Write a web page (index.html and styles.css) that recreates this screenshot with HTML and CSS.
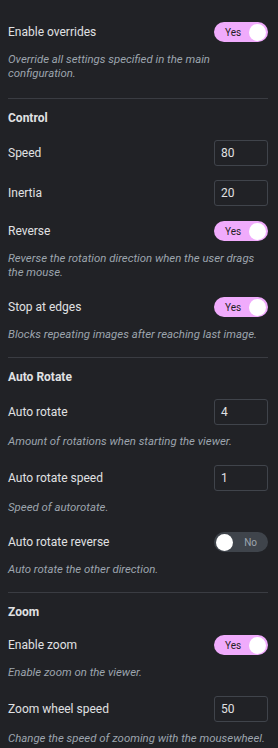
FILE: index.html
```html
<!DOCTYPE html>
<html>
<head>
<meta charset="utf-8">
<link rel="stylesheet" href="styles.css">
</head>
<body>
<div class="panel">
  <div class="control">
    <div class="row"><span class="label">Enable overrides</span><span class="switch on"><span class="sw-text">Yes</span><span class="knob"></span></span></div>
    <p class="desc">Override all settings specified in the main configuration.</p>
  </div>
  <div class="section">
    <div class="heading">Control</div>
    <div class="control">
      <div class="row"><span class="label">Speed</span><span class="input">80</span></div>
    </div>
    <div class="control">
      <div class="row"><span class="label">Inertia</span><span class="input">20</span></div>
    </div>
    <div class="control">
      <div class="row"><span class="label">Reverse</span><span class="switch on"><span class="sw-text">Yes</span><span class="knob"></span></span></div>
      <p class="desc">Reverse the rotation direction when the user drags the mouse.</p>
    </div>
    <div class="control">
      <div class="row"><span class="label">Stop at edges</span><span class="switch on"><span class="sw-text">Yes</span><span class="knob"></span></span></div>
      <p class="desc">Blocks repeating images after reaching last image.</p>
    </div>
  </div>
  <div class="section">
    <div class="heading">Auto Rotate</div>
    <div class="control">
      <div class="row"><span class="label">Auto rotate</span><span class="input">4</span></div>
      <p class="desc">Amount of rotations when starting the viewer.</p>
    </div>
    <div class="control">
      <div class="row"><span class="label">Auto rotate speed</span><span class="input">1</span></div>
      <p class="desc">Speed of autorotate.</p>
    </div>
    <div class="control">
      <div class="row"><span class="label">Auto rotate reverse</span><span class="switch off"><span class="knob"></span><span class="sw-text">No</span></span></div>
      <p class="desc">Auto rotate the other direction.</p>
    </div>
  </div>
  <div class="section">
    <div class="heading">Zoom</div>
    <div class="control">
      <div class="row"><span class="label">Enable zoom</span><span class="switch on"><span class="sw-text">Yes</span><span class="knob"></span></span></div>
      <p class="desc">Enable zoom on the viewer.</p>
    </div>
    <div class="control">
      <div class="row"><span class="label">Zoom wheel speed</span><span class="input">50</span></div>
      <p class="desc">Change the speed of zooming with the mousewheel.</p>
    </div>
  </div>
</div>
</body>
</html>
```
FILE: styles.css
```css
html, body {
  margin: 0;
  padding: 0;
  background: #212226;
}
body {
  font-family: Roboto, "Liberation Sans", sans-serif;
  color: #e0e1e3;
  width: 278px;
  height: 748px;
  overflow: hidden;
}
.panel {
  display: flex;
  flex-direction: column;
  padding: 21px 10px 0 8px;
}
.section {
  display: flex;
  flex-direction: column;
  margin-top: 13px;
  border-top: 1px solid #3a3c42;
}
.panel > .control + .section {
  margin-top: 15px;
}
.control {
  display: flex;
  flex-direction: column;
  margin-top: 14px;
}
.panel > .control:first-child {
  margin-top: 0;
}
.row {
  display: flex;
  align-items: center;
  justify-content: space-between;
  min-height: 22px;
}
.label {
  font-size: 12px;
  line-height: 16px;
  color: #e0e1e3;
}
.desc {
  margin: 9px 0 3px;
  font-size: 11.4px;
  line-height: 14px;
  font-style: italic;
  color: #9da5ae;
}
.heading {
  margin-top: 11px;
  font-size: 12px;
  line-height: 16px;
  font-weight: 700;
  color: #e0e1e3;
}
.input {
  box-sizing: border-box;
  width: 54px;
  height: 26px;
  border: 1px solid #40444b;
  border-radius: 3px;
  padding: 0 6px;
  font-size: 12px;
  line-height: 24px;
  color: #e0e1e3;
}
.switch {
  box-sizing: border-box;
  width: 54px;
  height: 20px;
  border-radius: 10px;
  display: flex;
  align-items: center;
  justify-content: space-between;
  padding: 0 2px 0 0;
  font-size: 10px;
}
.switch.on {
  background: #f0abfc;
  color: #1f2124;
  padding-left: 11px;
}
.switch.off {
  background: #3f444b;
  color: #9da5ae;
  padding: 0 11px 0 2px;
}
.knob {
  width: 17px;
  height: 17px;
  border-radius: 50%;
  background: #ffffff;
}
```
